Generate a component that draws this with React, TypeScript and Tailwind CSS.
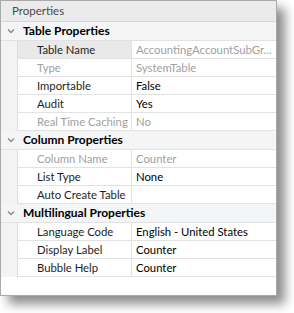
type Prop = { name: string; value: string; disabled?: boolean; selected?: boolean };
type Group = { title: string; items: Prop[] };

const groups: Group[] = [
  {
    title: 'Table Properties',
    items: [
      { name: 'Table Name', value: 'AccountingAccountSubGr...', selected: true },
      { name: 'Type', value: 'SystemTable', disabled: true },
      { name: 'Importable', value: 'False' },
      { name: 'Audit', value: 'Yes' },
      { name: 'Real Time Caching', value: 'No', disabled: true },
    ],
  },
  {
    title: 'Column Properties',
    items: [
      { name: 'Column Name', value: 'Counter', disabled: true },
      { name: 'List Type', value: 'None' },
      { name: 'Auto Create Table', value: '' },
    ],
  },
  {
    title: 'Multilingual Properties',
    items: [
      { name: 'Language Code', value: 'English - United States' },
      { name: 'Display Label', value: 'Counter' },
      { name: 'Bubble Help', value: 'Counter' },
    ],
  },
];

const Chevron = () => (
  <svg width="8" height="6" viewBox="0 0 8 6" className="block">
    <path d="M1 1.5 L4 4.5 L7 1.5" fill="none" stroke="#8a8a8a" strokeWidth="1.4" />
  </svg>
);

export default function App() {
  return (
    <div className="w-[294px] h-[313px] bg-white font-['Lato','Open_Sans',sans-serif] text-[11.3px] leading-none">
      <div className="w-[277px] h-[296px] border border-[#a9a9a9] bg-white flex flex-col shadow-[8px_8px_10px_rgba(0,0,0,0.45)]">
        <div className="h-[21px] shrink-0 bg-[#ebebeb] border-b border-[#d6d6d6] flex items-center pl-[11px] text-[#4a4a4a] text-[11.5px]">
          Properties
        </div>
        <div className="flex flex-col">
          {groups.map((g) => (
            <div key={g.title} className="flex flex-col">
              <div className="h-[19px] flex items-center bg-[#f4f5f7] border-b border-[#e2e2e2]">
                <div className="w-[18px] flex justify-center pl-[2px]">
                  <Chevron />
                </div>
                <span className="pl-[4px] font-bold text-[12px] text-black">{g.title}</span>
              </div>
              {g.items.map((p) => (
                <div key={p.name} className="h-[18px] flex">
                  <div className="w-[17px] shrink-0 bg-[#f3f3f3] border-r border-[#dcdcdc]" />
                  <div
                    className={`w-[114px] shrink-0 border-b border-r border-[#e2e2e2] flex items-center pl-[19px] ${
                      p.selected ? 'bg-[#e9e9e9]' : 'bg-white'
                    } ${p.disabled ? 'text-[#a0a0a0]' : 'text-[#1e1e1e]'}`}
                  >
                    <span className="whitespace-nowrap">{p.name}</span>
                  </div>
                  <div
                    className={`flex-1 min-w-0 border-b border-[#e2e2e2] flex items-center pl-[4px] ${
                      p.disabled || p.selected ? 'text-[#a0a0a0]' : 'text-black'
                    }`}
                  >
                    <span className="whitespace-nowrap">{p.value}</span>
                  </div>
                </div>
              ))}
            </div>
          ))}
        </div>
      </div>
    </div>
  );
}
